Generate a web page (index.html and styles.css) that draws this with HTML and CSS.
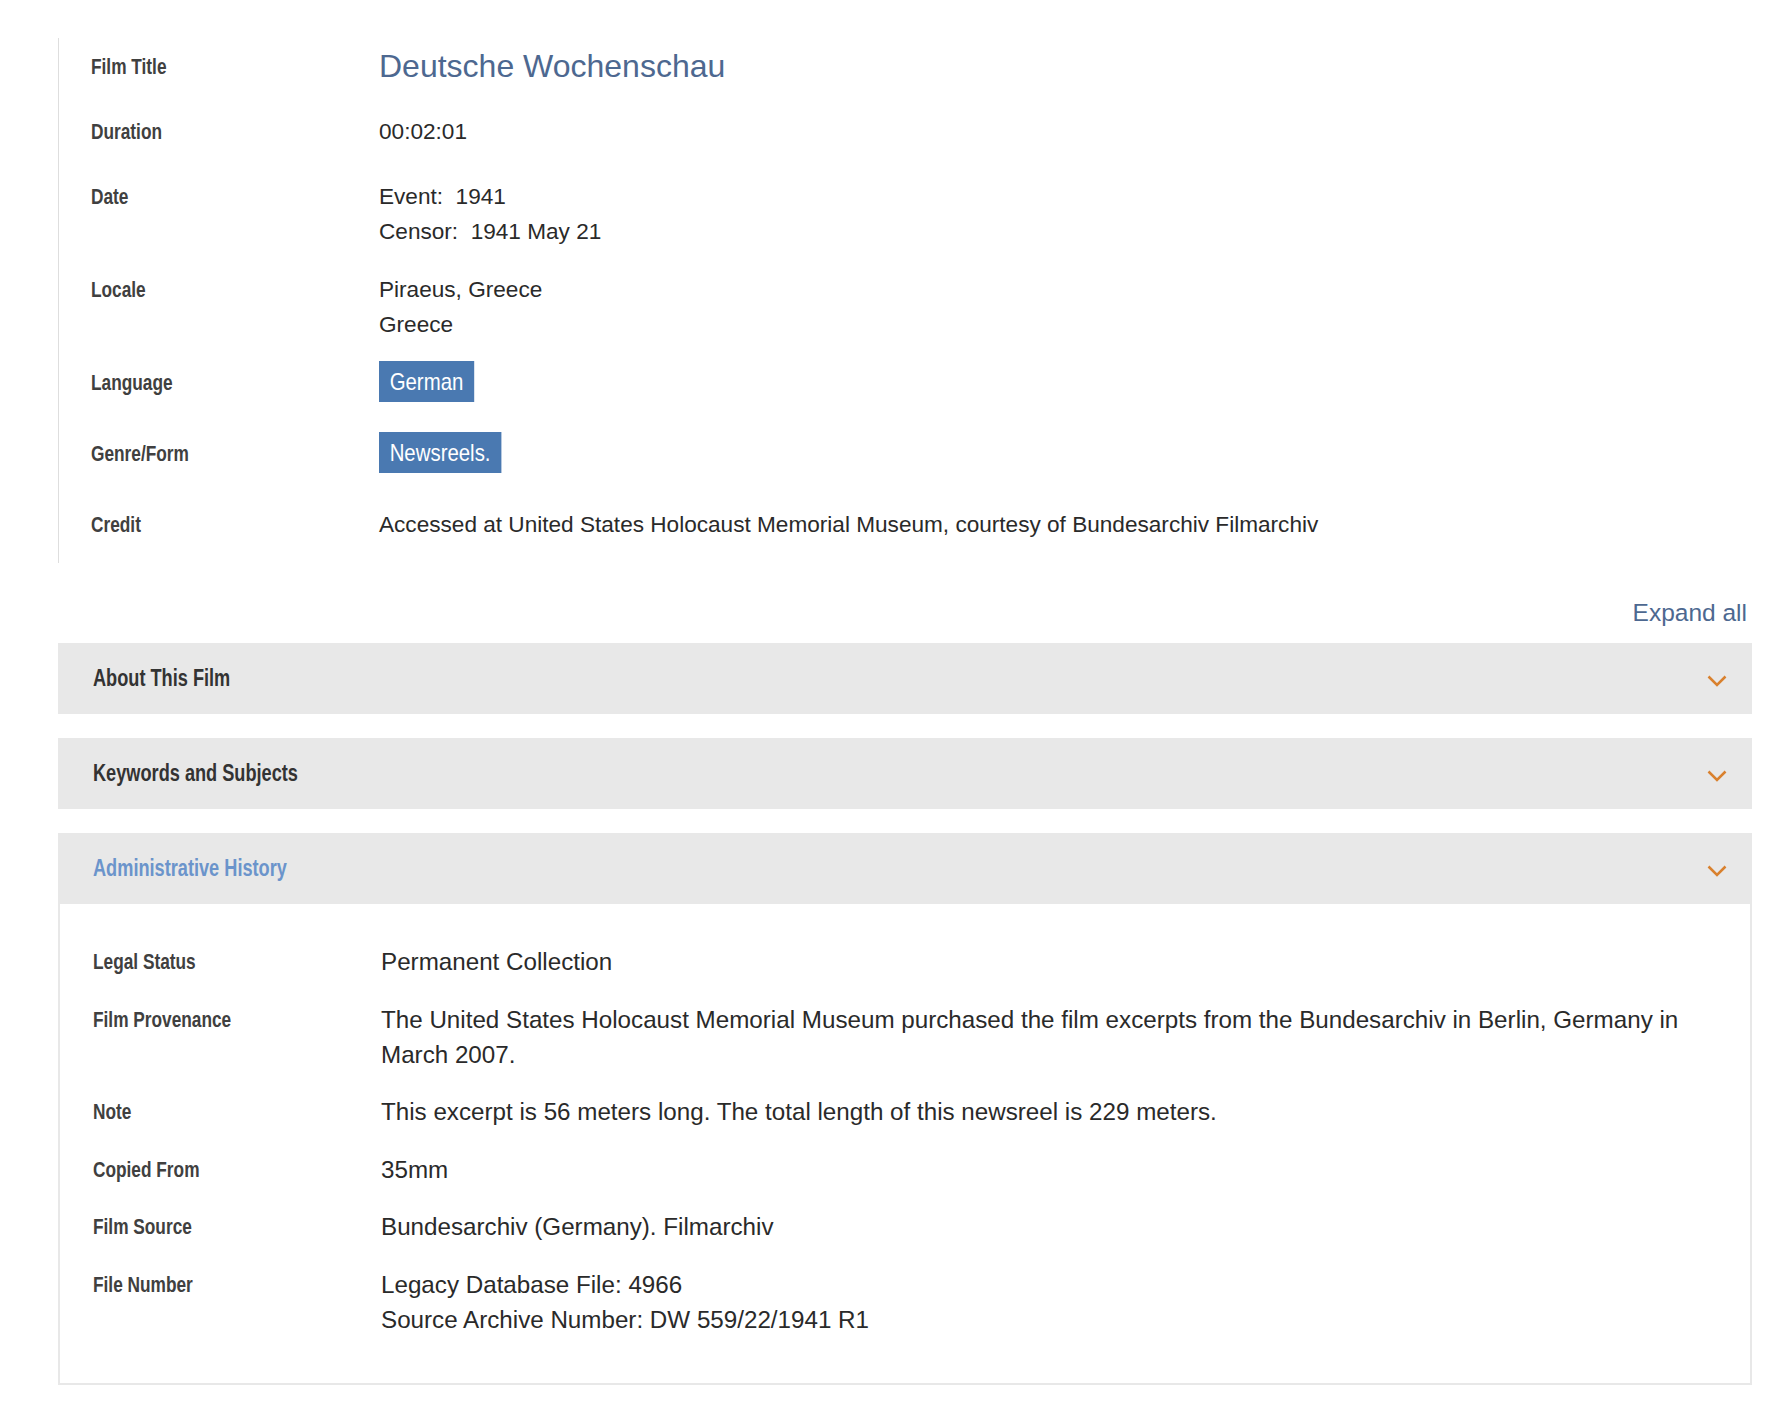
FILE: index.html
```html
<!DOCTYPE html>
<html lang="en">
<head>
<meta charset="utf-8">
<title>Deutsche Wochenschau</title>
<link rel="stylesheet" href="styles.css">
</head>
<body>
<main class="page">
  <section class="summary">
    <div class="row">
      <div class="label">Film Title</div>
      <div class="value"><h1 class="title">Deutsche Wochenschau</h1></div>
    </div>
    <div class="row">
      <div class="label">Duration</div>
      <div class="value">00:02:01</div>
    </div>
    <div class="row">
      <div class="label">Date</div>
      <div class="value">
        <div>Event:&nbsp; 1941</div>
        <div>Censor:&nbsp; 1941 May 21</div>
      </div>
    </div>
    <div class="row">
      <div class="label">Locale</div>
      <div class="value">
        <div>Piraeus, Greece</div>
        <div>Greece</div>
      </div>
    </div>
    <div class="row">
      <div class="label">Language</div>
      <div class="value tags"><span class="tag">German</span></div>
    </div>
    <div class="row">
      <div class="label">Genre/Form</div>
      <div class="value tags"><span class="tag">Newsreels.</span></div>
    </div>
    <div class="row">
      <div class="label">Credit</div>
      <div class="value">Accessed at United States Holocaust Memorial Museum, courtesy of Bundesarchiv Filmarchiv</div>
    </div>
  </section>

  <div class="expand-line"><a class="expand" href="#">Expand all</a></div>

  <section class="accordion">
    <div class="panel">
      <div class="panel-head">
        <span class="panel-title">About This Film</span>
        <svg class="chev" width="20" height="12" viewBox="0 0 20 12"><path d="M1.5 1.5 L10 10 L18.5 1.5" fill="none" stroke="#d9812e" stroke-width="2.5"/></svg>
      </div>
    </div>
    <div class="panel">
      <div class="panel-head">
        <span class="panel-title">Keywords and Subjects</span>
        <svg class="chev" width="20" height="12" viewBox="0 0 20 12"><path d="M1.5 1.5 L10 10 L18.5 1.5" fill="none" stroke="#d9812e" stroke-width="2.5"/></svg>
      </div>
    </div>
    <div class="panel open">
      <div class="panel-head">
        <span class="panel-title active">Administrative History</span>
        <svg class="chev" width="20" height="12" viewBox="0 0 20 12"><path d="M1.5 1.5 L10 10 L18.5 1.5" fill="none" stroke="#d9812e" stroke-width="2.5"/></svg>
      </div>
      <div class="panel-body">
        <div class="arow">
          <div class="alabel">Legal Status</div>
          <div class="avalue">Permanent Collection</div>
        </div>
        <div class="arow">
          <div class="alabel">Film Provenance</div>
          <div class="avalue">The United States Holocaust Memorial Museum purchased the film excerpts from the Bundesarchiv in Berlin, Germany in March 2007.</div>
        </div>
        <div class="arow">
          <div class="alabel">Note</div>
          <div class="avalue">This excerpt is 56 meters long. The total length of this newsreel is 229 meters.</div>
        </div>
        <div class="arow">
          <div class="alabel">Copied From</div>
          <div class="avalue">35mm</div>
        </div>
        <div class="arow">
          <div class="alabel">Film Source</div>
          <div class="avalue">Bundesarchiv (Germany). Filmarchiv</div>
        </div>
        <div class="arow">
          <div class="alabel">File Number</div>
          <div class="avalue">
            <div>Legacy Database File: 4966</div>
            <div>Source Archive Number: DW 559/22/1941 R1</div>
          </div>
        </div>
      </div>
    </div>
  </section>
</main>
</body>
</html>
```

FILE: styles.css
```css
html, body {
  margin: 0;
  padding: 0;
  background: #ffffff;
}

body {
  font-family: "Liberation Sans", Arial, sans-serif;
  color: #2a2a2a;
}

.page {
  padding: 38px 34px 40px 58px;
}

/* ---- summary block ---- */
.summary {
  border-left: 1px solid #dedede;
  padding: 11px 0 14px 32px;
  display: flex;
  flex-direction: column;
  gap: 23px;
}

.row {
  display: flex;
  align-items: flex-start;
}

/* condensed bold labels: Liberation Sans Bold narrowed horizontally */
.label,
.alabel,
.panel-title {
  font-family: "Liberation Sans", Arial, sans-serif;
  font-weight: bold;
  transform-origin: left center;
}

.label,
.alabel {
  font-size: 22px;
  color: #404040;
  transform: scaleX(0.785);
  flex: 0 0 auto;
}

.label {
  width: 288px;
  line-height: 35px;
  padding-bottom: 7px;
}

.value {
  font-size: 22.6px;
  line-height: 35px;
  color: #2a2a2a;
}

.title {
  margin: 0;
  font-weight: normal;
  font-size: 32px;
  line-height: 35px;
  color: #4d6890;
}

.value.tags {
  display: flex;
  align-items: flex-start;
}

.tag {
  display: inline-block;
  background: #4a79b1;
  color: #ffffff;
  font-size: 24px;
  height: 41px;
  line-height: 41px;
  padding: 0 12.5px;
  margin: -4px 0 11px;
  transform: scaleX(0.85);
  transform-origin: left top;
}

/* ---- expand all ---- */
.expand-line {
  display: flex;
  justify-content: flex-end;
  padding-right: 5px;
  margin-top: 32px;
  margin-bottom: 13px;
  line-height: 35px;
}

.expand {
  font-size: 24.5px;
  color: #4d6890;
  text-decoration: none;
}

/* ---- accordion ---- */
.accordion {
  display: flex;
  flex-direction: column;
  gap: 24px;
}

.panel-head {
  background: #e8e8e8;
  height: 71px;
  display: flex;
  align-items: center;
  justify-content: space-between;
  padding: 0 25px 0 35px;
  box-sizing: border-box;
}

.panel-title {
  font-size: 23px;
  color: #333333;
  transform: scaleX(0.79);
  white-space: nowrap;
}

.panel-title.active {
  color: #6b94cb;
}

.chev {
  display: block;
  margin-top: 4px;
}

.panel-body {
  border: 2px solid #e8e8e8;
  border-top: none;
  padding: 40px 50px 46px 33px;
  display: flex;
  flex-direction: column;
  gap: 22.5px;
}

.arow {
  display: flex;
  align-items: flex-start;
}

.alabel {
  width: 288px;
  line-height: 35px;
}

.avalue {
  font-size: 24.2px;
  line-height: 35px;
  color: #2a2a2a;
}
```
